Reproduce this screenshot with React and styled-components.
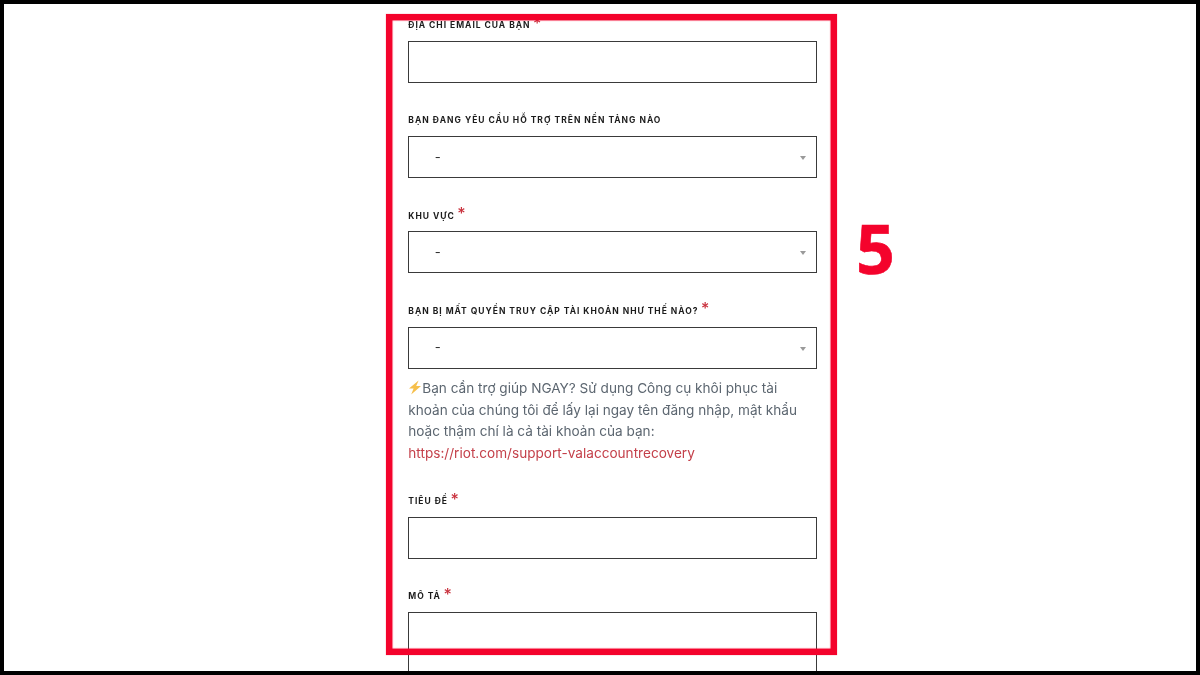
import React from "react";
import styled, { createGlobalStyle } from "styled-components";

const Global = createGlobalStyle`
  html, body { margin: 0; padding: 0; background: #000; }
  * { box-sizing: border-box; }
`;

const Frame = styled.main`
  position: relative;
  width: 1200px;
  height: 675px;
  border: 4px solid #000;
  background: #fff;
  overflow: hidden;
  font-family: Inter, "Liberation Sans", sans-serif;
`;

const Form = styled.form`
  display: flex;
  flex-direction: column;
  width: 408.5px;
  margin-left: 404.3px;
  padding-top: 13px;
  filter: blur(0.4px);
`;

const Field = styled.div`
  display: flex;
  flex-direction: column;
  margin-bottom: 29.2px;
`;

const Label = styled.label`
  display: block;
  height: 16px;
  margin-bottom: 8px;
  padding-top: 0.3px;
  font-size: 8.5px;
  font-weight: 700;
  line-height: 16px;
  letter-spacing: 0.98px;
  text-transform: uppercase;
  color: #1c1c1c;
  white-space: nowrap;
`;

const Star = styled.span`
  margin-left: 2.5px;
  font-size: 16px;
  font-weight: 500;
  line-height: 0;
  letter-spacing: 0;
  color: #c9303c;
  vertical-align: -0.5px;
`;

const TextBox = styled.input`
  display: block;
  width: 100%;
  height: ${(p) => (p.$tall ? "120px" : "42px")};
  border: 1px solid #3a3a3a;
  border-radius: 0;
  background: #fff;
  outline: none;
  resize: none;
`;

const SelectBox = styled.div`
  display: flex;
  align-items: center;
  justify-content: space-between;
  height: 42px;
  padding: 0 10px 0 25.5px;
  border: 1px solid #3a3a3a;
  background: #fff;
`;

const SelectValue = styled.span`
  font-size: 13px;
  line-height: 16px;
  color: #333;
  margin-top: -1px;
`;

const Caret = styled.span`
  width: 0;
  height: 0;
  margin-top: 2px;
  border-left: 3.5px solid transparent;
  border-right: 3.5px solid transparent;
  border-top: 4px solid #9a9a9a;
`;

const Help = styled.p`
  margin: 9.6px 0 -0.9px;
  font-size: 13.6px;
  line-height: 21.6px;
  color: #5c6670;
`;

const Bolt = styled.svg`
  width: 14px;
  height: 15px;
  vertical-align: -2px;
`;

const HelpLink = styled.a`
  color: #c4404a;
  text-decoration: none;
`;

const Highlight = styled.div`
  position: absolute;
  left: 382px;
  top: 10px;
  width: 451px;
  height: 641px;
  border: 6px solid #f4032c;
  box-shadow: inset 0 0 1px 0.5px #f4032c, 0 0 1px rgba(244, 3, 44, 0.5);
  pointer-events: none;
`;

const StepNumber = styled.div`
  position: absolute;
  left: 852px;
  top: 198px;
  font-family: "Open Sans", "Liberation Sans", sans-serif;
  font-size: 68px;
  font-weight: 700;
  line-height: 92px;
  color: #f4032c;
  -webkit-text-stroke: 0.6px #f4032c;
`;

const Req = () => <Star>*</Star>;

const Select = () => (
  <SelectBox>
    <SelectValue>-</SelectValue>
    <Caret />
  </SelectBox>
);

export default function App() {
  return (
    <Frame>
      <Global />
      <Form>
        <Field>
          <Label>Địa chỉ email của bạn<Req /></Label>
          <TextBox type="email" />
        </Field>
        <Field>
          <Label>Bạn đang yêu cầu hỗ trợ trên nền tảng nào</Label>
          <Select />
        </Field>
        <Field>
          <Label>Khu vực<Req /></Label>
          <Select />
        </Field>
        <Field>
          <Label>Bạn bị mất quyền truy cập tài khoản như thế nào?<Req /></Label>
          <Select />
          <Help>
            <Bolt viewBox="0 0 14 15" aria-hidden="true">
              <path d="M10.6 0.6 1 8.6h4.6L3.2 14.4 13 5.9H8.2z" fill="#f6bf4b" />
            </Bolt>
            Bạn cần trợ giúp NGAY? Sử dụng Công cụ khôi phục tài khoản của chúng tôi để lấy lại ngay tên đăng nhập, mật khẩu hoặc thậm chí là cả tài khoản của bạn:{" "}
            <HelpLink href="#">https://riot.com/support-valaccountrecovery</HelpLink>
          </Help>
        </Field>
        <Field>
          <Label>Tiêu đề<Req /></Label>
          <TextBox type="text" />
        </Field>
        <Field>
          <Label>Mô tả<Req /></Label>
          <TextBox as="textarea" $tall />
        </Field>
      </Form>
      <Highlight />
      <StepNumber>5</StepNumber>
    </Frame>
  );
}
